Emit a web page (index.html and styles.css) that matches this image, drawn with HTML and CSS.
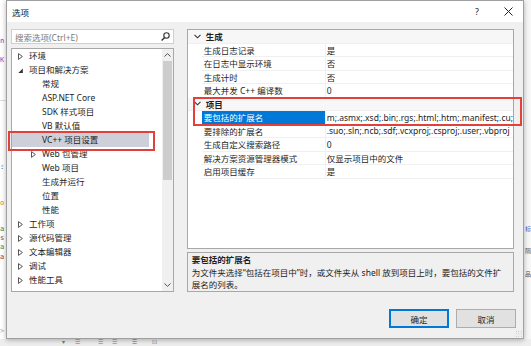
FILE: index.html
```html
<!DOCTYPE html>
<html lang="zh-CN">
<head>
<meta charset="utf-8">
<title>选项</title>
<link rel="stylesheet" href="styles.css">
</head>
<body>
<div class="ide">
  <div class="ide-left">
    <span class="code c-blue" style="top:37px">n</span>
    <span class="code c-purple" style="top:56px">K</span>
    <span class="hline" style="top:100px"></span>
    <span class="code c-dark" style="top:163px">:</span>
    <span class="code c-orange" style="top:199px">o</span>
    <span class="code c-green" style="top:225px">a</span>
    <span class="code c-dark" style="top:234px">s</span>
    <span class="code c-green" style="top:243px">a</span>
    <span class="code c-red" style="top:253px">a</span>
    <span class="code c-gray" style="top:327px">&gt;</span>
  </div>
  <div class="ide-right">
    <span class="code c-blue" style="top:224px">标</span>
    <span class="code c-dark" style="top:246px">隔</span>
    <span class="code c-dark" style="top:269px">品</span>
  </div>
  <div class="ide-bottom">
    <span class="tb" style="left:62px">▾</span>
    <span class="tb" style="left:75px">☰</span>
    <span class="tb" style="left:98px">☰</span>
    <span class="tb" style="left:112px">☰</span>
    <span class="tb red" style="left:132px">☰</span>
    <span class="tb" style="left:152px">⊡</span>
  </div>
</div>

<div class="dialog">
  <div class="titlebar">
    <span class="title">选项</span>
    <span class="tbtn help">?</span>
    <span class="tbtn close"><svg width="9" height="9" viewBox="0 0 9 9"><path d="M0.5 0.5L8.5 8.5M8.5 0.5L0.5 8.5" stroke="#222" stroke-width="1"/></svg></span>
  </div>

  <div class="content">
    <div class="main">
      <div class="leftcol">
        <div class="search">
          <span class="placeholder">搜索选项(Ctrl+E)</span>
          <svg class="mag" width="9" height="9" viewBox="0 0 9 9"><circle cx="5.5" cy="3.5" r="2.7" fill="none" stroke="#333" stroke-width="1.1"/><path d="M3.6 5.4L0.6 8.4" stroke="#333" stroke-width="1.4"/></svg>
        </div>
        <div class="tree">
          <div class="tree-list">
            <div class="trow"><span class="arr"><svg width="5" height="7" viewBox="0 0 5 7"><path d="M0.5 0.6L4.4 3.5L0.5 6.4Z" fill="none" stroke="#444" stroke-width="0.9"/></svg></span>环境</div>
            <div class="trow"><span class="arr"><svg width="5" height="7" viewBox="0 0 5 7"><path d="M4.8 1.5V6H0.3Z" fill="#333"/></svg></span>项目和解决方案</div>
            <div class="trow l1"><span class="arr"></span>常规</div>
            <div class="trow l1"><span class="arr"></span>ASP.NET Core</div>
            <div class="trow l1"><span class="arr"></span>SDK 样式项目</div>
            <div class="trow l1"><span class="arr"></span>VB 默认值</div>
            <div class="trow l1 sel"><span class="arr"></span>VC++ 项目设置</div>
            <div class="trow l1"><span class="arr"><svg width="5" height="7" viewBox="0 0 5 7"><path d="M0.5 0.6L4.4 3.5L0.5 6.4Z" fill="none" stroke="#444" stroke-width="0.9"/></svg></span>Web 包管理</div>
            <div class="trow l1"><span class="arr"></span>Web 项目</div>
            <div class="trow l1"><span class="arr"></span>生成并运行</div>
            <div class="trow l1"><span class="arr"></span>位置</div>
            <div class="trow l1"><span class="arr"></span>性能</div>
            <div class="trow"><span class="arr"><svg width="5" height="7" viewBox="0 0 5 7"><path d="M0.5 0.6L4.4 3.5L0.5 6.4Z" fill="none" stroke="#444" stroke-width="0.9"/></svg></span>工作项</div>
            <div class="trow"><span class="arr"><svg width="5" height="7" viewBox="0 0 5 7"><path d="M0.5 0.6L4.4 3.5L0.5 6.4Z" fill="none" stroke="#444" stroke-width="0.9"/></svg></span>源代码管理</div>
            <div class="trow"><span class="arr"><svg width="5" height="7" viewBox="0 0 5 7"><path d="M0.5 0.6L4.4 3.5L0.5 6.4Z" fill="none" stroke="#444" stroke-width="0.9"/></svg></span>文本编辑器</div>
            <div class="trow"><span class="arr"><svg width="5" height="7" viewBox="0 0 5 7"><path d="M0.5 0.6L4.4 3.5L0.5 6.4Z" fill="none" stroke="#444" stroke-width="0.9"/></svg></span>调试</div>
            <div class="trow"><span class="arr"><svg width="5" height="7" viewBox="0 0 5 7"><path d="M0.5 0.6L4.4 3.5L0.5 6.4Z" fill="none" stroke="#444" stroke-width="0.9"/></svg></span>性能工具</div>
          </div>
          <div class="vscroll">
            <span class="sarrow"><svg width="7" height="4" viewBox="0 0 7 4"><path d="M0.5 3.5L3.5 0.6L6.5 3.5" fill="none" stroke="#555" stroke-width="1"/></svg></span>
            <div class="track"><div class="thumb"></div></div>
            <span class="sarrow"><svg width="7" height="4" viewBox="0 0 7 4"><path d="M0.5 0.5L3.5 3.4L6.5 0.5" fill="none" stroke="#555" stroke-width="1"/></svg></span>
          </div>
        </div>
      </div>

      <div class="rightcol">
        <div class="grid">
          <div class="cat"><span class="chev"><svg width="7" height="5" viewBox="0 0 7 5"><path d="M0.5 0.8L3.5 3.8L6.5 0.8" fill="none" stroke="#333" stroke-width="1.1"/></svg></span>生成</div>
          <div class="prow"><span class="pname">生成日志记录</span><span class="pval">是</span></div>
          <div class="prow"><span class="pname">在日志中显示环境</span><span class="pval">否</span></div>
          <div class="prow"><span class="pname">生成计时</span><span class="pval">否</span></div>
          <div class="prow"><span class="pname">最大并发 C++ 编译数</span><span class="pval">0</span></div>
          <div class="cat"><span class="chev"><svg width="7" height="5" viewBox="0 0 7 5"><path d="M0.5 0.8L3.5 3.8L6.5 0.8" fill="none" stroke="#333" stroke-width="1.1"/></svg></span>项目</div>
          <div class="prow psel"><span class="pname">要包括的扩展名</span><span class="pval">m;.asmx;.xsd;.bin;.rgs;.html;.htm;.manifest;.cu;</span></div>
          <div class="prow"><span class="pname">要排除的扩展名</span><span class="pval">.suo;.sln;.ncb;.sdf;.vcxproj;.csproj;.user;.vbproj</span></div>
          <div class="prow"><span class="pname">生成自定义搜索路径</span><span class="pval">0</span></div>
          <div class="prow"><span class="pname">解决方案资源管理器模式</span><span class="pval">仅显示项目中的文件</span></div>
          <div class="prow"><span class="pname">启用项目缓存</span><span class="pval">是</span></div>
        </div>
        <div class="desc">
          <div class="desc-title">要包括的扩展名</div>
          <div class="desc-text">为文件夹选择“包括在项目中”时，或文件夹从 shell 放到项目上时，要包括的文件扩<br>展名的列表。</div>
        </div>
      </div>
    </div>

    <div class="buttons">
      <button class="btn default">确定</button>
      <button class="btn">取消</button>
    </div>
  </div>

  <div class="mark mark-tree"></div>
  <div class="mark mark-grid"></div>
  <div class="grip"></div>
</div>
</body>
</html>
```

FILE: styles.css
```css
* { box-sizing: border-box; }
html, body { margin: 0; padding: 0; }
body {
  width: 531px;
  height: 346px;
  overflow: hidden;
  position: relative;
  background: #f3f3f3;
  font-family: "Noto Sans", "Noto Sans CJK SC", sans-serif;
  font-size: 8.5px;
  color: #1e1e1e;
}

/* IDE behind the dialog */
.ide { position: absolute; left: 0; top: 0; width: 531px; height: 346px; }
.ide-left { position: absolute; left: 0; top: 0; width: 6px; height: 346px; background: #fff; overflow: hidden; }
.ide-right { position: absolute; right: 0; top: 0; width: 7px; height: 346px; background: #f7f7f7; overflow: hidden; }
.ide-bottom { position: absolute; left: 0; bottom: 0; width: 531px; height: 7px; background: #eeeeee; overflow: hidden; }
.code { position: absolute; left: 0; font-family: "DejaVu Sans Mono", monospace; font-size: 7px; line-height: 9px; white-space: nowrap; }
.ide-right .code { left: 1px; font-family: "Noto Sans CJK SC", sans-serif; font-size: 6px; }
.c-blue { color: #3b5bd6; }
.c-purple { color: #8a4fc6; }
.c-dark { color: #555; }
.c-orange { color: #c98a1c; }
.c-green { color: #2e8b57; }
.c-red { color: #b03030; }
.c-gray { color: #aaa; }
.hline { position: absolute; left: 0; width: 6px; height: 1px; background: #ddd; }
.tb { position: absolute; top: 0; font-size: 6px; line-height: 7px; color: #777; }
.tb.red { color: #c33; }

/* dialog */
.dialog {
  position: relative;
  z-index: 1;
  margin-left: 6px;
  width: 518px;
  height: 339px;
  background: #f0f0f0;
  border: 1px solid #a0a0a0;
  box-shadow: 0 1px 5px rgba(0, 0, 0, 0.3);
  display: flex;
  flex-direction: column;
}
.titlebar {
  height: 21px;
  background: #fff;
  display: flex;
  align-items: center;
  padding-left: 5px;
  flex: none;
}
.title { font-size: 8.5px; color: #111; flex: 1; }
.tbtn { width: 30px; height: 21px; display: flex; align-items: center; justify-content: center; }
.help { font-size: 9px; color: #222; margin-right: 1px; }

.content { padding: 7px 9px 0 4px; flex: 1; display: flex; flex-direction: column; }
.main { display: flex; gap: 13px; height: 263px; }
.leftcol { width: 168px; display: flex; flex-direction: column; gap: 4px; }
.search {
  height: 15px;
  background: #fff;
  border: 1px solid #cfcfcf;
  display: flex;
  align-items: center;
  padding: 0 3px 0 3px;
}
.placeholder { flex: 1; color: #7a7a7a; }
.mag { flex: none; }

.tree {
  height: 244px;
  background: #fff;
  border: 1px solid #a8a8a8;
  display: flex;
}
.tree-list { flex: 1; padding-top: 0; }
.trow {
  height: 14px;
  line-height: 14px;
  display: flex;
  align-items: center;
  padding-left: 5px;
  white-space: nowrap;
}
.trow.l1 { padding-left: 18px; }
.trow.sel { background: #cdd0d9; margin-right: 13px; }
.arr { width: 7px; margin-right: 5px; display: flex; align-items: center; justify-content: center; flex: none; }
.vscroll { width: 11px; background: #f0f0f0; display: flex; flex-direction: column; }
.sarrow { height: 12px; display: flex; align-items: center; justify-content: center; flex: none; }
.track { flex: 1; padding: 0 1px; }
.thumb { height: 119px; background: #cdcdcd; }

.rightcol { flex: 1; display: flex; flex-direction: column; gap: 3px; }
.grid {
  height: 220px;
  background: #fff;
  border: 1px solid #a8a8a8;
  overflow: hidden;
}
.cat {
  height: 13.5px;
  display: flex;
  align-items: center;
  font-weight: bold;
  background: #f7f7f7;
  border-bottom: 1px solid #f0f0f0;
  white-space: nowrap;
}
.chev { width: 18px; padding-left: 1px; display: flex; align-items: center; justify-content: center; flex: none; }
.prow {
  height: 13.5px;
  display: flex;
  align-items: center;
  margin-left: 14px;
  border-bottom: 1px solid #f0f0f0;
  white-space: nowrap;
}
.pname { width: 124px; height: 100%; display: flex; align-items: center; padding-left: 2px; flex: none; border-right: 1px solid #f0f0f0; }
.pval { padding-left: 1px; overflow: hidden; }
.psel .pname { background: #0078d7; color: #fff; }

.desc {
  height: 40px;
  border: 1px solid #a8a8a8;
  background: #f0f0f0;
  padding: 1px 4px 0 4px;
  line-height: 12.5px;
}
.desc-title { font-weight: bold; }
.desc-text { white-space: nowrap; color: #222; }

.buttons { display: flex; justify-content: flex-end; gap: 7px; margin-top: 17px; margin-right: -2px; }
.btn {
  width: 60px;
  height: 19px;
  background: #e1e1e1;
  border: 1px solid #adadad;
  font-family: "Noto Sans", "Noto Sans CJK SC", sans-serif;
  font-size: 8.5px;
  color: #1e1e1e;
  padding: 0;
}
.btn.default { border: 1px solid #0078d7; box-shadow: inset 0 0 0 1px #0078d7; }

/* annotation boxes */
.mark { position: absolute; border: 2px solid #e53f3b; pointer-events: none; }
.mark-tree { left: 1px; top: 130px; width: 147px; height: 20px; }
.mark-grid { left: 186px; top: 96px; width: 329px; height: 29px; }
.grip {
  position: absolute; right: 1px; bottom: 1px; width: 7px; height: 7px;
  background-image: radial-gradient(circle, #b0b0b0 0.7px, transparent 0.8px);
  background-size: 2.5px 2.5px;
}
```
